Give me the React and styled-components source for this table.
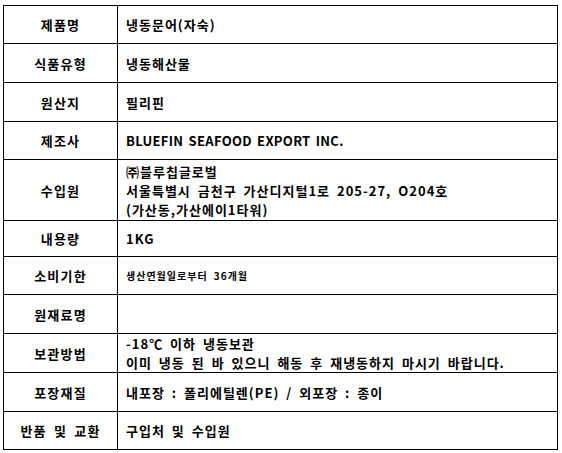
import React from 'react';
import styled, { createGlobalStyle } from 'styled-components';

const GlobalStyle = createGlobalStyle`
    html, body {
        margin: 0;
        padding: 0;
        background: #fff;
    }
    body {
        font-family: 'Noto Sans CJK KR', 'Noto Sans', sans-serif;
        color: #000;
    }
`;

const Contenedor = styled.div`
    padding: 5px 0 0 3px;
`;

const Tabla = styled.table`
    width: 555px;
    border-collapse: collapse;
    table-layout: fixed;
    border: 1px solid #000;
`;

const Fila = styled.tr`
    height: ${(p) => p.$alto}px;
`;

const Etiqueta = styled.th`
    width: 113px;
    padding: 0;
    border: 1px solid #000;
    text-align: center;
    vertical-align: middle;
    font-size: 13px;
    font-weight: 700;
    letter-spacing: 1.2px;
    word-spacing: 3px;
`;

const Valor = styled.td`
    padding: 0 0 0 8px;
    border: 1px solid #000;
    text-align: left;
    vertical-align: middle;
    font-size: ${(p) => (p.$chico ? '10px' : '13px')};
    font-weight: 700;
    line-height: 19px;
    letter-spacing: ${(p) => (p.$latino ? '0.3px' : '1px')};
    word-spacing: ${(p) => (p.$latino ? '2px' : '3px')};
`;

const Linea = styled.div`
    white-space: nowrap;
`;

const filas = [
    { etiqueta: '제품명', alto: 38, lineas: ['냉동문어(자숙)'] },
    { etiqueta: '식품유형', alto: 39, lineas: ['냉동해산물'] },
    { etiqueta: '원산지', alto: 39, lineas: ['필리핀'] },
    { etiqueta: '제조사', alto: 38, lineas: ['BLUEFIN SEAFOOD EXPORT INC.'], latino: true },
    {
        etiqueta: '수입원',
        alto: 61,
        lineas: [
            '㈜블루칩글로벌',
            '서울특별시 금천구 가산디지털1로 205-27, O204호',
            '(가산동,가산에이1타워)',
        ],
    },
    { etiqueta: '내용량', alto: 36, lineas: ['1KG'] },
    { etiqueta: '소비기한', alto: 38, lineas: ['생산연월일로부터 36개월'], chico: true },
    { etiqueta: '원재료명', alto: 39, lineas: [] },
    {
        etiqueta: '보관방법',
        alto: 39,
        lineas: ['-18℃ 이하 냉동보관', '이미 냉동 된 바 있으니 해동 후 재냉동하지 마시기 바랍니다.'],
    },
    { etiqueta: '포장재질', alto: 39, lineas: ['내포장 : 폴리에틸렌(PE) / 외포장 : 종이'] },
    { etiqueta: '반품 및 교환', alto: 38, lineas: ['구입처 및 수입원'] },
];

const App = () => {
    return (
        <>
            <GlobalStyle />
            <Contenedor>
                <Tabla>
                    <tbody>
                        {filas.map((fila) => (
                            <Fila key={fila.etiqueta} $alto={fila.alto}>
                                <Etiqueta>{fila.etiqueta}</Etiqueta>
                                <Valor $chico={fila.chico} $latino={fila.latino}>
                                    {fila.lineas.map((l) => (
                                        <Linea key={l}>{l}</Linea>
                                    ))}
                                </Valor>
                            </Fila>
                        ))}
                    </tbody>
                </Tabla>
            </Contenedor>
        </>
    );
};

export default App;
